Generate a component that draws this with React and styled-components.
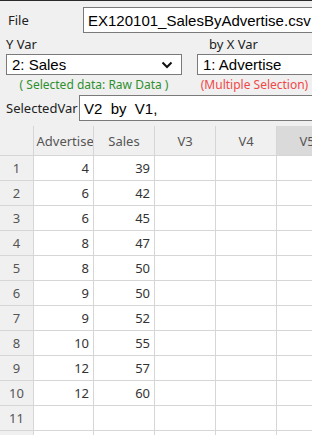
import React from "react";
import styled, { createGlobalStyle } from "styled-components";

const Global = createGlobalStyle`
  html, body { margin: 0; padding: 0; background: #f0f0f0; overflow: hidden; }
  #root { width: 312px; height: 435px; }
`;

const Page = styled.div`
  width: 312px;
  height: 435px;
  overflow: hidden;
  background: #f0f0f0;
  border-top: 1px solid #2a2a2a;
  box-sizing: border-box;
  font-family: "Noto Sans", "Open Sans", sans-serif;
  display: flex;
  flex-direction: column;
`;

const Form = styled.div`
  display: flex;
  flex-direction: column;
  padding-top: 6px;
`;

const FieldRow = styled.div`
  display: flex;
  align-items: center;
  height: 26px;
  padding-left: ${(p) => p.$pad}px;
`;

const Label = styled.div`
  width: ${(p) => p.$w}px;
  flex: none;
  font-size: 13px;
  color: #222;
  white-space: nowrap;
`;

const TextBox = styled.div`
  flex: none;
  width: 300px;
  height: 26px;
  box-sizing: border-box;
  background: #fff;
  border: 1px solid #7a7a7a;
  padding-left: 4px;
  display: flex;
  align-items: center;
  font-family: "Liberation Sans", Arial, sans-serif;
  font-size: 15px;
  color: #000;
  white-space: pre;
`;

const VarGrid = styled.div`
  display: grid;
  grid-template-columns: 176px 130px;
  column-gap: 15px;
  padding-left: 6px;
  grid-template-rows: 19px 21px 20px;
  margin-top: 2px;
`;

const VarLabel = styled.div`
  font-size: 13px;
  line-height: 19px;
  color: #222;
  padding-left: ${(p) => p.$pad || 0}px;
  white-space: nowrap;
`;

const Select = styled.div`
  height: 21px;
  box-sizing: border-box;
  background: #fff;
  border: 1px solid #7a7a7a;
  display: flex;
  align-items: center;
  justify-content: space-between;
  padding: 0 8px 0 5px;
  font-family: "Liberation Sans", Arial, sans-serif;
  font-size: 15px;
  color: #000;
  white-space: nowrap;
`;

const Note = styled.div`
  font-size: 12px;
  line-height: 20px;
  color: ${(p) => p.$color};
  text-align: center;
  width: ${(p) => p.$w}px;
  white-space: nowrap;
`;

const Divider = styled.div`
  height: 2px;
  background: #262626;
  margin-top: 5px;
`;

const Sheet = styled.div`
  display: grid;
  grid-template-columns: 34px 60px 61px 61px 61px 61px;
  grid-auto-rows: 25px;
  grid-template-rows: 30px;
  font-size: 13px;
`;

const Cell = styled.div`
  box-sizing: border-box;
  border-right: 1px solid #d6d6d6;
  border-bottom: 1px solid #d6d6d6;
  display: flex;
  align-items: center;
  overflow: hidden;
  white-space: nowrap;
  background: ${(p) => (p.$kind === "head" ? (p.$sel ? "#dadada" : "#f0f0f0") : p.$kind === "row" ? "#f0f0f0" : "#fff")};
  color: ${(p) => (p.$kind === "cell" ? "#333" : "#555")};
  justify-content: ${(p) => (p.$kind === "cell" ? "flex-end" : "center")};
  padding: ${(p) => (p.$kind === "cell" ? "0 4px 0 0" : p.$kind === "head" ? "0 0 0 5px" : "0")};
`;

const HeadText = styled.span`
  display: block;
  width: 100%;
  text-align: center;
  padding-right: 5px;
`;

const Chevron = () => (
  <svg width="12" height="8" viewBox="0 0 12 8">
    <path d="M1.5 1.5 L6 6 L10.5 1.5" fill="none" stroke="#111" strokeWidth="2" />
  </svg>
);

const data = [
  [4, 39], [6, 42], [6, 45], [8, 47], [8, 50],
  [9, 50], [9, 52], [10, 55], [12, 57], [12, 60],
];

const headers = ["Advertise", "Sales", "V3", "V4", "V5"];

export default function App() {
  const rows = [];
  for (let i = 0; i < 12; i++) rows.push(data[i] || [null, null]);
  return (
    <Page>
      <Global />
      <Form>
        <FieldRow $pad={8}>
          <Label $w={75}>File</Label>
          <TextBox>EX120101_SalesByAdvertise.csv</TextBox>
        </FieldRow>
        <VarGrid>
          <VarLabel>Y Var</VarLabel>
          <VarLabel $pad={12}>by X Var</VarLabel>
          <Select>
            <span>2: Sales</span>
            <Chevron />
          </Select>
          <Select>
            <span>1: Advertise</span>
          </Select>
          <Note $color="#2f8f2f" $w={176}>( Selected data: Raw Data )</Note>
          <Note $color="#f04848" $w={115}>(Multiple Selection)</Note>
        </VarGrid>
        <FieldRow $pad={6}>
          <Label $w={73}>SelectedVar</Label>
          <TextBox>V2  by  V1,</TextBox>
        </FieldRow>
      </Form>
      <Divider />
      <Sheet>
        <Cell $kind="head" />
        {headers.map((h) => (
          <Cell key={h} $kind="head" $sel={h === "V5"}>
            <HeadText>{h}</HeadText>
          </Cell>
        ))}
        {rows.map((r, i) => (
          <React.Fragment key={i}>
            <Cell $kind="row">{i < 11 ? i + 1 : ""}</Cell>
            <Cell $kind="cell">{r[0]}</Cell>
            <Cell $kind="cell">{r[1]}</Cell>
            <Cell $kind="cell" />
            <Cell $kind="cell" />
            <Cell $kind="cell" />
          </React.Fragment>
        ))}
      </Sheet>
    </Page>
  );
}
